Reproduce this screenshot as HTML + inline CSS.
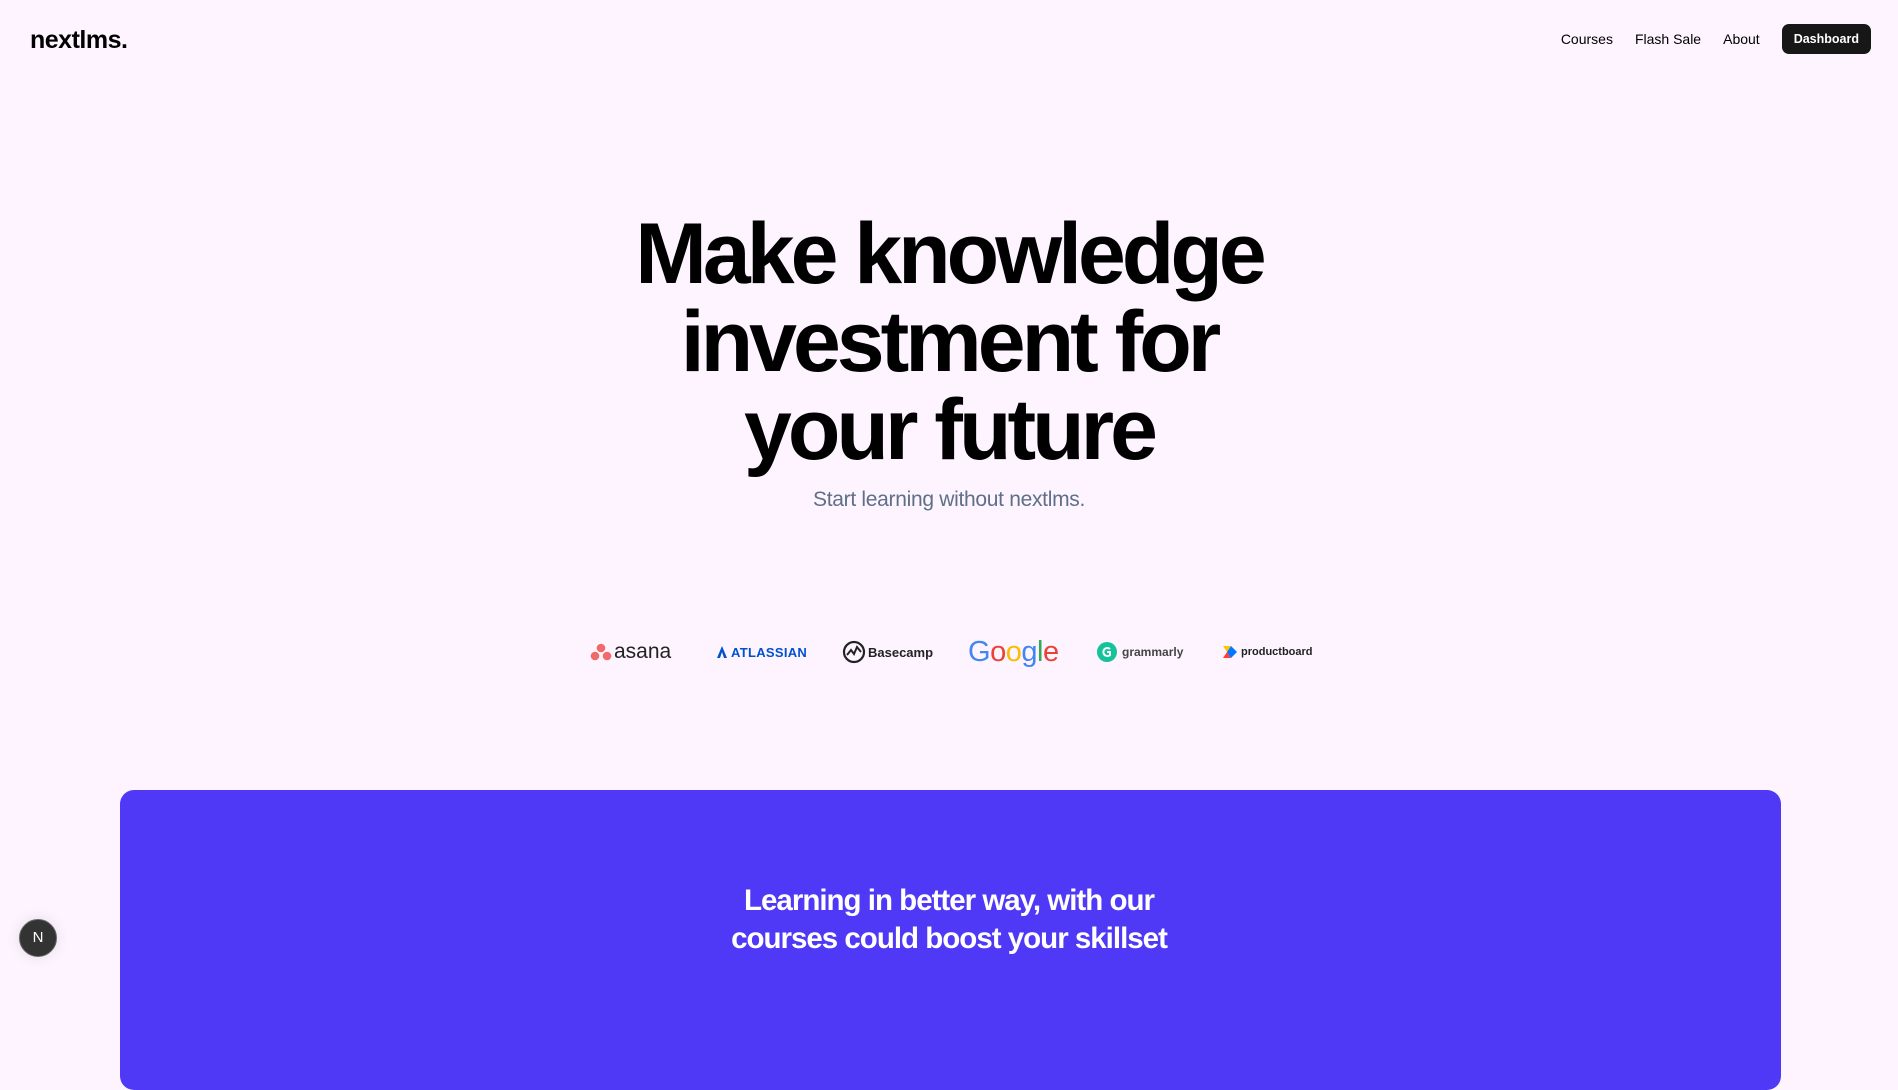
<!DOCTYPE html>
<html><head><meta charset="utf-8"><style>
*{margin:0;padding:0;box-sizing:border-box}
body{width:1898px;height:976px;overflow:hidden;background:#fdf4ff;font-family:"Liberation Sans",sans-serif;position:relative;color:#000}
.logo{position:absolute;left:30px;top:26px;font-size:25px;font-weight:bold;letter-spacing:-0.5px}
.nav{position:absolute;top:24px;right:27px;display:flex;align-items:center;font-size:14px}
.nav span{margin-right:22px}
.btn{background:#171717;color:#fff;border-radius:7px;padding:0 12px;height:30px;line-height:30px;font-size:12.5px;font-weight:bold}
h1{position:absolute;left:0;width:1898px;top:210px;text-align:center;font-size:86px;line-height:88px;font-weight:bold;letter-spacing:-4px}
.sub{position:absolute;left:0;width:1898px;top:488px;text-align:center;font-size:21px;color:#5f6f86;letter-spacing:-0.3px}
.logos{position:absolute;top:636px;left:590px;width:722px;height:32px}
.logos>div{position:absolute;top:0;height:32px;display:flex;align-items:center}
.box{position:absolute;left:120px;top:790px;width:1661px;height:300px;background:#4f39f6;border-radius:14px}
.bt{position:absolute;left:0;width:1898px;top:882px;text-align:center;color:#fff;font-size:29.5px;line-height:38px;font-weight:bold;letter-spacing:-1px}
.n{position:absolute;left:19px;top:919px;width:38px;height:38px;border-radius:50%;background:#333;border:1.5px solid #666;color:#fff;font-size:15px;text-align:center;line-height:35px;box-shadow:0 0 14px rgba(0,0,0,0.1)}
</style></head><body>
<div class="logo">nextlms.</div>
<div class="nav"><span>Courses</span><span>Flash Sale</span><span>About</span><div class="btn">Dashboard</div></div>
<h1>Make knowledge<br>investment for<br>your future</h1>
<div class="sub">Start learning without nextlms.</div>
<div class="logos">
 <div style="left:0"><svg width="22" height="20"><circle cx="11" cy="6" r="4.3" fill="#f06a6a"/><circle cx="5" cy="14" r="4.3" fill="#f06a6a"/><circle cx="17" cy="14" r="4.3" fill="#f06a6a"/></svg><span style="font-size:21px;margin-left:2px;color:#222">asana</span></div>
 <div style="left:126px"><svg width="12" height="14"><path d="M6 1 L11 13 H8 L6 7 L4 13 H1Z" fill="#0052cc"/></svg><span style="font-size:13px;font-weight:bold;color:#0052cc;margin-left:3px;letter-spacing:0.3px">ATLASSIAN</span></div>
 <div style="left:252px"><svg width="24" height="24"><circle cx="12" cy="12" r="10" fill="none" stroke="#222" stroke-width="2.2"/><path d="M5 15 L9 10 L12 14 L15 7 L19 12" fill="none" stroke="#222" stroke-width="2"/></svg><span style="font-size:13px;font-weight:bold;color:#222;margin-left:2px">Basecamp</span></div>
 <div style="left:378px"><span style="font-size:29px;letter-spacing:-0.5px"><span style="color:#4285f4">G</span><span style="color:#ea4335">o</span><span style="color:#fbbc05">o</span><span style="color:#4285f4">g</span><span style="color:#34a853">l</span><span style="color:#ea4335">e</span></span></div>
 <div style="left:506px"><svg width="22" height="22"><circle cx="11" cy="11" r="10" fill="#15c39a"/><path d="M14 8 A4 4 0 1 0 14 14 L14 11 H11" fill="none" stroke="#fff" stroke-width="2"/></svg><span style="font-size:12px;font-weight:bold;color:#444;margin-left:4px">grammarly</span></div>
 <div style="left:632px"><svg width="16" height="14"><path d="M1 1 H9 L5 7Z" fill="#ffc600"/><path d="M1 13 H9 L5 7Z" fill="#ff3d3d"/><path d="M5 7 L9 1 L15 7 L9 13Z" fill="#0077ff"/></svg><span style="font-size:11px;font-weight:bold;color:#222;margin-left:3px">productboard</span></div>
</div>
<div class="box"></div>
<div class="bt">Learning in better way, with our<br>courses could boost your skillset</div>
<div class="n">N</div>
</body></html>
